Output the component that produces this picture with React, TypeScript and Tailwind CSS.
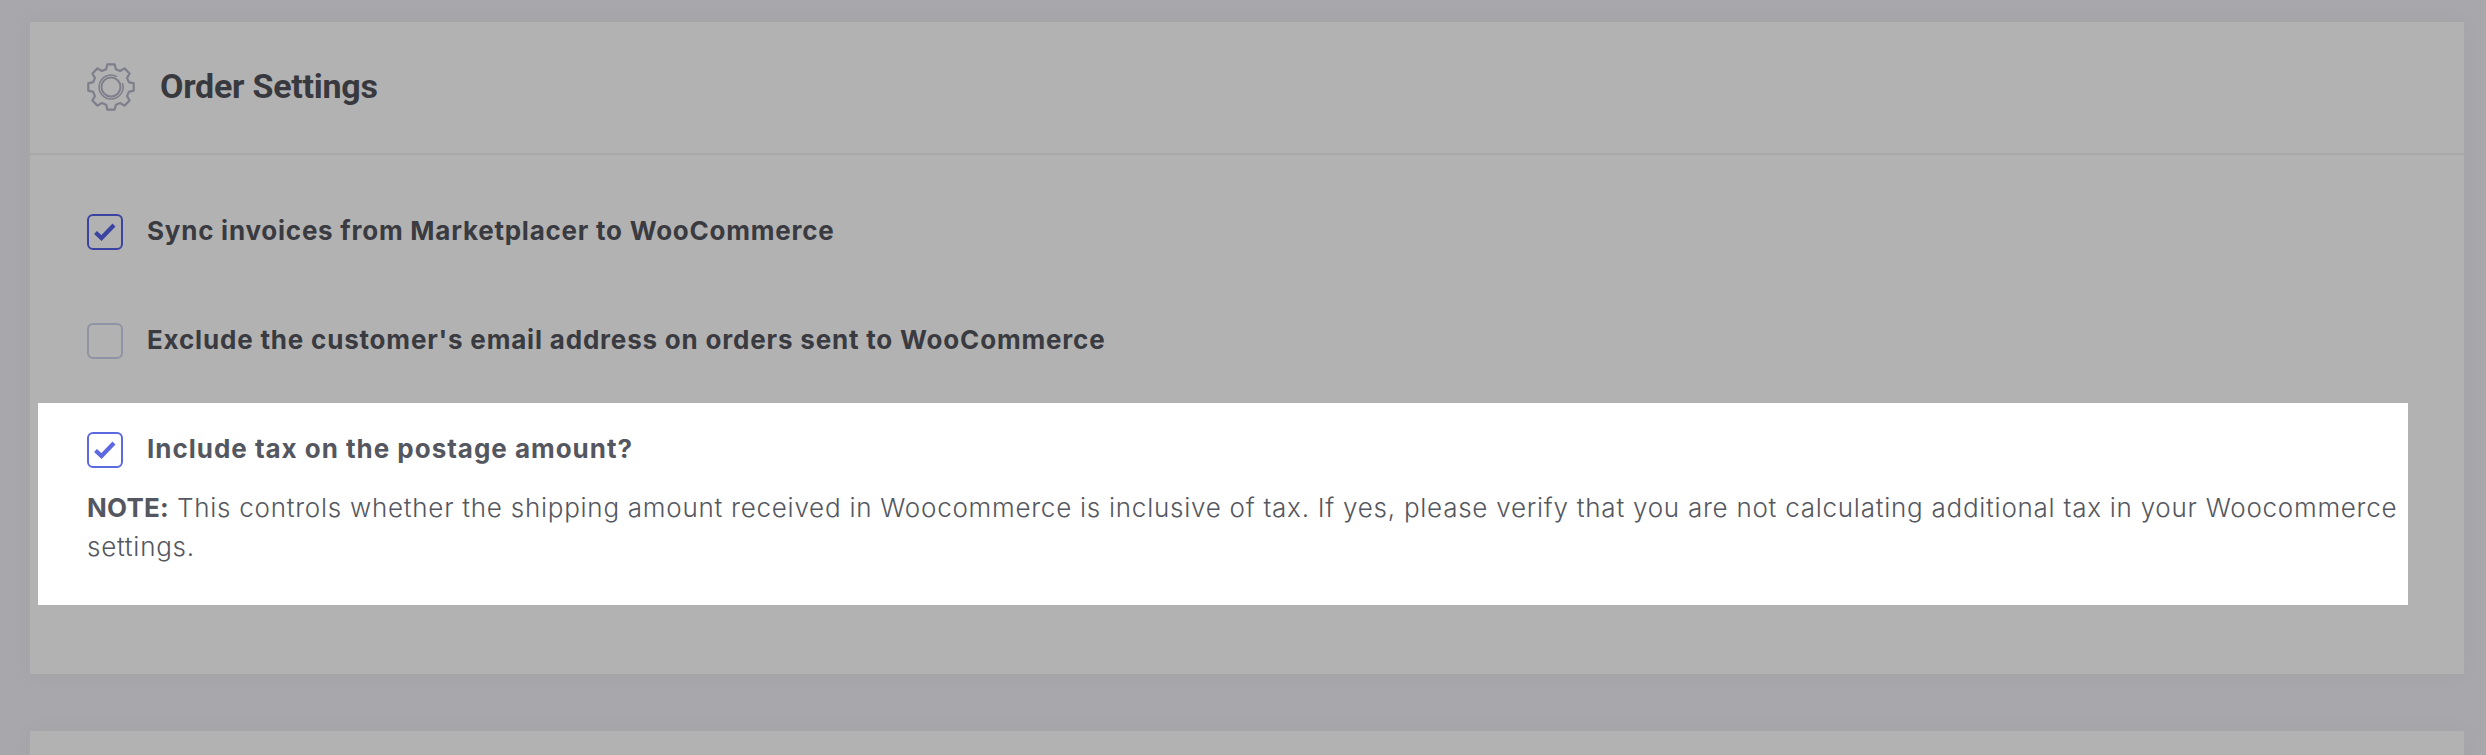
const SANS = "font-['Inter',sans-serif]";

function gearPath(cx: number, cy: number, teeth: number, outer: number, inner: number) {
  const pts: string[] = [];
  const step = (Math.PI * 2) / teeth;
  for (let i = 0; i < teeth; i++) {
    const a = i * step - Math.PI / 2;
    const offsets: [number, number][] = [
      [-0.34, inner],
      [-0.2, outer],
      [0.2, outer],
      [0.34, inner],
    ];
    for (const [o, r] of offsets) {
      const t = a + o * step;
      pts.push(`${(cx + r * Math.cos(t)).toFixed(2)} ${(cy + r * Math.sin(t)).toFixed(2)}`);
    }
  }
  return `M${pts.join('L')}Z`;
}

function GearIcon() {
  return (
    <svg width="48" height="48" viewBox="0 0 48 48" fill="none" stroke="#7f7f8c" className="shrink-0">
      <path d={gearPath(24, 24, 8, 23, 18.5)} strokeWidth="2.2" strokeLinejoin="round" />
      <circle cx="24" cy="24" r="9.5" strokeWidth="2" />
      <path d="M30 13.6A12 12 0 1 0 35.4 20" strokeWidth="1.6" />
    </svg>
  );
}

type CheckProps = { checked: boolean; tone: string };

function Check({ checked, tone }: CheckProps) {
  return (
    <span className={`flex h-9 w-9 shrink-0 items-center justify-center rounded-[6px] border-2 ${tone}`}>
      {checked && (
        <svg width="22" height="20" viewBox="0 0 22 20" fill="none" stroke="currentColor">
          <path d="M1.5 10.5 7.5 16 20 3" strokeWidth="4.2" />
        </svg>
      )}
    </span>
  );
}

export default function App() {
  return (
    <div className="h-[755px] overflow-hidden bg-[#a8a8ac] px-[22px] pt-[22px]">
      <section className="ml-[8px] w-[2434px] bg-[#b2b2b2] shadow-[0_0_24px_rgba(0,0,0,0.03)]">
        <header className="flex h-[133px] items-center gap-[25px] border-b-2 border-[#a9a9ac] pb-[2px] pl-[57px]">
          <GearIcon />
          <h2 className="font-['Roboto',sans-serif] text-[34px] font-bold tracking-[-0.25px] text-[#38393f]">Order Settings</h2>
        </header>
        <div className="pt-[59px] pb-[69px]">
          <label className="flex items-start gap-[24px] pl-[57px]">
            <Check checked tone="border-[#3a44a0] text-[#3a44a0]" />
            <span className={`${SANS} text-[26px] leading-[34px] font-bold tracking-[0.76px] text-[#3a3b41]`}>Sync invoices from Marketplacer to WooCommerce</span>
          </label>
          <label className="mt-[73px] flex items-start gap-[24px] pl-[57px]">
            <Check checked={false} tone="border-[#9093a3]" />
            <span className={`${SANS} text-[26px] leading-[34px] font-bold tracking-[0.81px] text-[#3a3b41]`}>Exclude the customer's email address on orders sent to WooCommerce</span>
          </label>
          <div className="mt-[44px] ml-[8px] w-[2370px] bg-white pt-[29px] pb-[39px] pl-[49px]">
            <label className="flex items-start gap-[24px]">
              <Check checked tone="border-[#5c69e0] text-[#5c69e0]" />
              <span className={`${SANS} text-[26px] leading-[34px] font-bold tracking-[0.98px] text-[#555760]`}>Include tax on the postage amount?</span>
            </label>
            <p className={`${SANS} mt-[20px] text-[26px] leading-[39px] font-light tracking-[0.74px] text-[#555760]`}>
              <strong className="font-bold tracking-[0.2px]">NOTE:</strong> This controls whether the shipping amount received in Woocommerce is inclusive of tax. If yes, please verify that you are not calculating additional tax in your Woocommerce settings.
            </p>
          </div>
        </div>
      </section>
      <section className="mt-[57px] ml-[8px] h-[100px] w-[2434px] bg-[#b2b2b2] shadow-[0_0_24px_rgba(0,0,0,0.03)]" />
    </div>
  );
}
